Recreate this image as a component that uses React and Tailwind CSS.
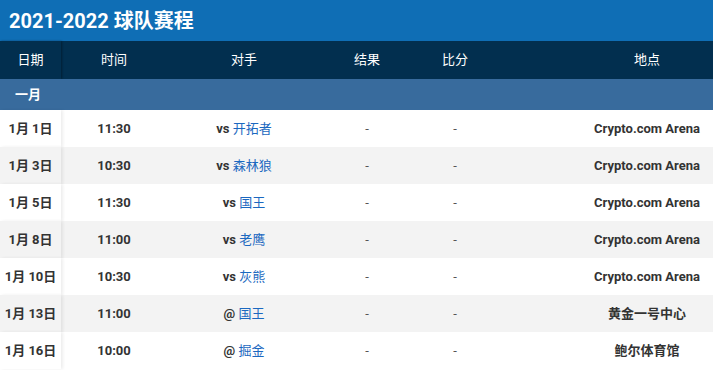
import React from 'react';

const games = [
  { date: '1月 1日', time: '11:30', pre: 'vs', team: '开拓者', venue: 'Crypto.com Arena' },
  { date: '1月 3日', time: '10:30', pre: 'vs', team: '森林狼', venue: 'Crypto.com Arena' },
  { date: '1月 5日', time: '11:30', pre: 'vs', team: '国王', venue: 'Crypto.com Arena' },
  { date: '1月 8日', time: '11:00', pre: 'vs', team: '老鹰', venue: 'Crypto.com Arena' },
  { date: '1月 10日', time: '10:30', pre: 'vs', team: '灰熊', venue: 'Crypto.com Arena' },
  { date: '1月 13日', time: '11:00', pre: '@', team: '国王', venue: '黄金一号中心' },
  { date: '1月 16日', time: '10:00', pre: '@', team: '掘金', venue: '鲍尔体育馆' },
];

const font = { fontFamily: 'Roboto, "Noto Sans CJK SC", sans-serif' };

export default function App() {
  return (
    <div className="w-[713px] h-[370px] overflow-hidden bg-white" style={font}>
      <div className="h-[41px] bg-[#0f6eb5] flex items-center px-[9px]">
        <h1 className="text-[20px] font-bold text-white leading-none">2021-2022 球队赛程</h1>
      </div>

      <table className="w-full table-fixed border-collapse text-[13px]">
        <colgroup>
          <col className="w-[61px]" />
          <col className="w-[106px]" />
          <col className="w-[154px]" />
          <col className="w-[92px]" />
          <col className="w-[84px]" />
          <col />
        </colgroup>
        <thead>
          <tr className="h-[38px] bg-[#022f4f] text-white">
            <th className="font-normal text-center shadow-[1px_0_2px_rgba(0,0,0,0.35)]">日期</th>
            <th className="font-normal text-center">时间</th>
            <th className="font-normal text-center">对手</th>
            <th className="font-normal text-center">结果</th>
            <th className="font-normal text-center">比分</th>
            <th className="font-normal text-center pl-[84px]">地点</th>
          </tr>
        </thead>
        <tbody>
          <tr className="h-[31px] bg-[#386b9d] text-white">
            <td colSpan="6" className="font-bold pl-[15px]">一月</td>
          </tr>
          {games.map((g, i) => (
            <tr key={i} className={`h-[37px] text-[#333] ${i % 2 === 1 ? 'bg-[#f3f3f3]' : 'bg-white'}`}>
              <td className="text-center font-bold whitespace-nowrap shadow-[2px_0_3px_rgba(0,0,0,0.07)]">{g.date}</td>
              <td className="text-center font-bold">{g.time}</td>
              <td className="text-center">
                <span className="font-bold">{g.pre}</span>{' '}
                <span className="text-[#1b68c0]">{g.team}</span>
              </td>
              <td className="text-center text-[#555]">-</td>
              <td className="text-center text-[#555]">-</td>
              <td className="text-center font-bold pl-[84px] whitespace-nowrap">{g.venue}</td>
            </tr>
          ))}
        </tbody>
      </table>
    </div>
  );
}
